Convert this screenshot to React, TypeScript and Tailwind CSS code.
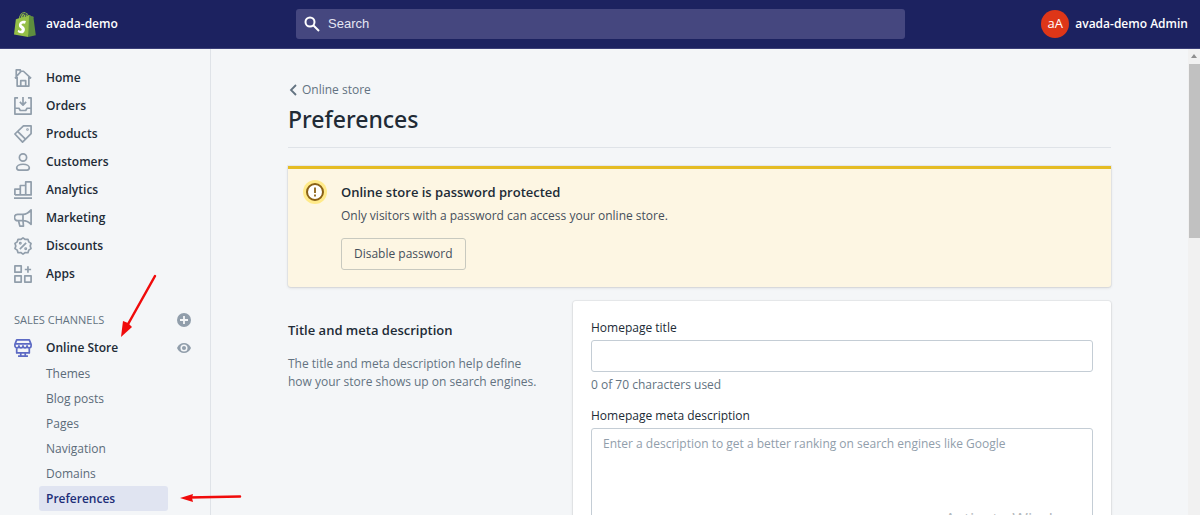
import type { ReactNode } from 'react';

const navItems: { label: string; icon: ReactNode }[] = [
  {
    label: 'Home',
    icon: (
      <>
        <path d="M3.500 9v10h13V9M1 10.500l1.500-1.500M19 10.500 10.500 2.500H8L2.500 8.500V1H7v2.500" />
        <path d="M7.500 19v-6h5.500v6" />
      </>
    ),
  },
  {
    label: 'Orders',
    icon: (
      <>
        <path d="M4.500 1H1v18h18V1h-3.500M1 12.500h4.500l1.500 2.500h6l1.500-2.500H19" />
        <path d="M10 0v9M6.500 5.500 10 9l3.500-3.500" />
      </>
    ),
  },
  {
    label: 'Products',
    icon: (
      <>
        <path d="M10.500 1H19v8.500L9.500 19 1 10z" />
        <path d="m4 7 9 9" />
        <circle cx="15" cy="5" r=".5" />
      </>
    ),
  },
  {
    label: 'Customers',
    icon: (
      <>
        <circle cx="10" cy="5" r="4" />
        <path d="M10 12.500c-4.500 0-7 2-7 4 0 1.500 1 2.500 2.500 2.500h9c1.500 0 2.500-1 2.500-2.500 0-2-2.500-4-7-4z" />
      </>
    ),
  },
  {
    label: 'Analytics',
    icon: <path d="M1 15.500V9h6v6.500M7 15.500V5h6v10.500M13 15.500V1h6v14.500zM1 15.500h18M0 19h20" />,
  },
  {
    label: 'Marketing',
    icon: (
      <>
        <path d="M19 1v16c-3-3-6-4-9-4H4a3.500 3.500 0 0 1 0-7h6c3 0 6-1.500 9-5zM10 6v7" />
        <path d="m5 13 1.500 6h4L10 13" />
      </>
    ),
  },
  {
    label: 'Discounts',
    icon: (
      <>
        <path d="m10 1 2.500 1.700 3-.2.900 2.900 2.500 1.700L18 10l.9 2.900-2.500 1.700-.9 2.900-3-.2L10 19l-2.500-1.700-3 .2-.9-2.900-2.500-1.700L2 10l-.9-2.900 2.500-1.700.9-2.900 3 .2z" />
        <path d="m6.500 13.500 7-7" />
        <circle cx="7" cy="7" r=".7" />
        <circle cx="13" cy="13" r=".7" />
      </>
    ),
  },
  {
    label: 'Apps',
    icon: <path d="M1 1h7v7H1zM1 12h7v7H1zM12 12h7v7h-7zM15.500 1.500v7M12 5h7" />,
  },
];

const channelPages = ['Themes', 'Blog posts', 'Pages', 'Navigation', 'Domains', 'Preferences'];

const NavIcon = ({ children }: { children: ReactNode }) => (
  <svg
    className="h-[18px] w-[18px] shrink-0"
    viewBox="0 0 20 20"
    fill="none"
    stroke="currentColor"
    strokeWidth="1.9"
    strokeLinejoin="round"
    aria-hidden="true"
  >
    {children}
  </svg>
);

const ShopifyLogo = () => (
  <svg className="h-[25px] w-[22px] shrink-0" viewBox="-2 0 110 124" aria-hidden="true">
    <path
      fill="#95bf47"
      d="M95 24c0-.6-.6-1-1-1l-10-.8-7.500-7.500c-.8-.8-2.200-.5-2.800-.3l-3.800 1.200C67.600 9 63.600 3 56.500 3h-.6C54 .6 51.500 0 49.500 0 33 0 25 20.500 22.500 31L11 34.600c-3.600 1.100-3.700 1.200-4.200 4.600L-2 112l71 12z"
    />
    <path fill="#5e8e3e" d="M94 23.200 84 22.400l-7.500-7.500-3-.8L69 124l38-8.500L95 24.300c0-.6-.5-1-1-1.100z" />
    <path
      fill="none"
      stroke="#1c2260"
      strokeWidth="4"
      d="M29 29C32 15 40 5 48 5c7 0 9 9 8 18M42 25C45 14 51 7 57 8c5 1 7 6 8 11"
    />
    <path
      fill="#fff"
      d="m57.600 44.700-4.800 14.200s-4.200-2.200-9.300-2.200c-7.500 0-7.900 4.700-7.900 5.900 0 6.500 16.900 9 16.900 24.100 0 11.900-7.600 19.600-17.700 19.600-12.200 0-18.400-7.600-18.400-7.600l3.300-10.700s6.400 5.500 11.800 5.500c3.500 0 5-2.800 5-4.800 0-8.400-13.900-8.800-13.900-22.600 0-11.700 8.400-22.900 25.200-22.900 6.600 0 9.800 1.500 9.800 1.500z"
    />
  </svg>
);

const Header = () => (
  <header className="flex h-[49px] shrink-0 items-center border-b border-[#3b3f78] bg-[#1c2260] pr-3 pl-3.5 text-xs font-semibold text-white">
    <a href="#" className="flex w-[282px] items-center gap-2.5">
      <ShopifyLogo />
      avada-demo
    </a>
    <label className="flex h-[30px] w-[609px] items-center gap-2 rounded-[3px] bg-[#45477f] px-2">
      <svg className="h-4 w-4 shrink-0" viewBox="0 0 16 16" fill="none" stroke="white" strokeWidth="2" aria-hidden="true">
        <circle cx="6" cy="6" r="4.500" />
        <path d="m9.500 9.500 5.500 5.500" />
      </svg>
      <input
        type="search"
        aria-label="Search"
        placeholder="Search"
        className="min-w-0 flex-1 bg-transparent font-['Liberation_Sans',sans-serif] text-[13px] font-normal outline-none placeholder:text-[#e4e5f2]"
      />
    </label>
    <button type="button" className="ml-auto flex items-center gap-1.5 whitespace-nowrap">
      <span className="flex h-7 w-7 items-center justify-center rounded-full bg-[#de3618] text-[13px] font-normal">aA</span>
      avada-demo Admin
    </button>
  </header>
);

const Sidebar = () => (
  <aside className="relative w-[211px] shrink-0 border-r border-[#dfe3e8] pt-[15px] text-xs text-[#212b36]">
    <nav aria-label="Main">
      <ul>
        {navItems.map((item) => (
          <li key={item.label}>
            <a href="#" className="flex h-7 items-center gap-3.5 pl-3.5 font-semibold">
              <span className="text-[#919eab]">
                <NavIcon>{item.icon}</NavIcon>
              </span>
              {item.label}
            </a>
          </li>
        ))}
      </ul>

      {/* Sales channels */}
      <div className="mt-[18px] flex h-7 items-center justify-between pr-[19px] pl-3.5">
        <h2 className="text-[11px] text-[#637381] uppercase">Sales channels</h2>
        <button type="button" aria-label="Add sales channel">
          <svg className="h-3.5 w-3.5" viewBox="0 0 14 14" aria-hidden="true">
            <circle cx="7" cy="7" r="7" fill="#919eab" />
            <path d="M7 3v8M3 7h8" stroke="#f4f6f8" strokeWidth="1.800" />
          </svg>
        </button>
      </div>
      <div className="flex h-[27px] items-center justify-between pr-[19px] pl-3.5">
        <a href="#" className="flex items-center gap-3.5 font-semibold">
          <span className="text-[#5c6ac4]">
            <NavIcon>
              <path d="M3 1h14l2 5v1.500a2.200 2.200 0 0 1-4.500 0 2.200 2.200 0 0 1-4.500 0 2.200 2.200 0 0 1-4.500 0 2.200 2.200 0 0 1-4.500 0V6zM1 5.500h18M3 10v5.500h14V10M7.500 15.500V19M12.500 15.500V19M4.500 19h11" />
            </NavIcon>
          </span>
          Online Store
        </a>
        <button type="button" aria-label="View your online store">
          <svg className="h-3.5 w-3.5" viewBox="0 0 14 14" aria-hidden="true">
            <path d="M0 7c1.500-3.300 4-5 7-5s5.500 1.700 7 5c-1.500 3.300-4 5-7 5S1.500 10.300 0 7z" fill="#919eab" />
            <circle cx="7" cy="7" r="2.800" fill="none" stroke="#f4f6f8" strokeWidth="1.500" />
          </svg>
        </button>
      </div>
      <ul className="pr-[42px] pl-[39px]">
        {channelPages.map((page) => (
          <li key={page}>
            <a
              href="#"
              className={
                page === 'Preferences'
                  ? 'flex h-[25px] items-center rounded-[3px] bg-[#e0e4f1] pl-[7px] font-semibold text-[#202e78]'
                  : 'flex h-[25px] items-center pl-[7px] text-[#5b6b79]'
              }
            >
              {page}
            </a>
          </li>
        ))}
      </ul>
    </nav>

    {/* Guide arrows */}
    <svg className="pointer-events-none absolute top-[225px] left-[119px] h-[64px] w-[38px]" viewBox="0 0 38 64" aria-hidden="true">
      <path d="M36 2 8 52" stroke="#f00b0b" strokeWidth="2.500" strokeLinecap="round" />
      <path d="m2 63 2-16 5 2 4 4z" fill="#f00b0b" />
    </svg>
    <svg className="pointer-events-none absolute top-[441px] left-[179px] h-4 w-16" viewBox="0 0 64 16" aria-hidden="true">
      <path d="m10 7.500 51-1" stroke="#f00b0b" strokeWidth="2.500" strokeLinecap="round" />
      <path d="m1 8 13-4-1 4 1 4z" fill="#f00b0b" />
    </svg>
  </aside>
);

const PasswordBanner = () => (
  <section className="mt-[18px] flex gap-3.5 rounded-b-[3px] border-t-[3px] border-[#e5bc23] bg-[#fdf6e3] px-[15px] pt-[11px] pb-[17px] shadow-[0_0_0_1px_rgba(63,63,68,0.06),0_1px_3px_rgba(63,63,68,0.15)]">
    <svg className="h-6 w-6 shrink-0" viewBox="0 0 24 24" aria-hidden="true">
      <circle cx="12" cy="12" r="12" fill="#ffea8a" />
      <circle cx="12" cy="12" r="8" fill="#fff" stroke="#8a6116" strokeWidth="2" />
      <path d="M12 7.500V13M12 14.500v2" stroke="#8a6116" strokeWidth="1.800" />
    </svg>
    <div className="text-xs text-[#454f5b]">
      <h2 className="text-[13px] leading-6 font-semibold text-[#212b36]">Online store is password protected</h2>
      <p className="leading-6">Only visitors with a password can access your online store.</p>
      <button type="button" className="mt-2.5 h-8 rounded-[3px] border border-[#c8c9bf] px-3">
        Disable password
      </button>
    </div>
  </section>
);

const TitleAndMeta = () => (
  <section className="mt-3.5 flex gap-3.5 text-xs">
    <div className="flex-1 pt-[18px]">
      <h2 className="text-[13px] leading-[22px] font-semibold text-[#212b36]">Title and meta description</h2>
      <p className="mt-3.5 max-w-[256px] leading-[18px] text-[#637381]">
        The title and meta description help define how your store shows up on search engines.
      </p>
    </div>
    <div className="w-[538px] rounded-[3px] bg-white px-[18px] pt-[18px] pb-6 text-[#212b36] shadow-[0_0_0_1px_rgba(63,63,68,0.06),0_1px_3px_rgba(63,63,68,0.15)]">
      <label htmlFor="homepage-title" className="block leading-[18px]">
        Homepage title
      </label>
      <input id="homepage-title" type="text" className="mt-[3px] block h-8 w-full rounded-[3px] border border-[#c4cdd5] px-[11px]" />
      <p className="mt-1 leading-[18px] text-[#637381]">0 of 70 characters used</p>
      <label htmlFor="homepage-meta" className="mt-[13px] block leading-[18px]">
        Homepage meta description
      </label>
      <textarea
        id="homepage-meta"
        placeholder="Enter a description to get a better ranking on search engines like Google"
        className="mt-[3px] block h-32 w-full resize-none rounded-[3px] border border-[#c4cdd5] px-[11px] py-1.5 leading-[18px] placeholder:text-[#919eab]"
      />
    </div>
  </section>
);

const App = () => {
  return (
    <div className="relative flex h-screen flex-col overflow-hidden bg-[#f4f6f8] font-['Open_Sans','Noto_Sans',sans-serif]">
      <Header />
      <div className="flex min-h-0 flex-1">
        <Sidebar />
        <main className="min-w-0 flex-1 overflow-hidden px-[77px] pt-8">
          <a href="#" className="flex items-center gap-1 text-xs leading-[18px] text-[#637381]">
            <svg className="h-3 w-2.5" viewBox="0 0 10 12" fill="none" stroke="currentColor" strokeWidth="1.800" aria-hidden="true">
              <path d="M8 1 3 6l5 5" />
            </svg>
            Online store
          </a>
          <h1 className="mt-[5px] border-b border-[#dfe3e8] pb-3 font-['Noto_Sans','Open_Sans',sans-serif] text-[23px] leading-[31px] font-medium text-[#212b36]">
            Preferences
          </h1>
          <PasswordBanner />
          <TitleAndMeta />
        </main>

        {/* Scroll track */}
        <div className="flex w-3 shrink-0 flex-col items-center bg-[#f1f1f1]" aria-hidden="true">
          <svg className="mt-[5px] h-1 w-1.5" viewBox="0 0 6 4">
            <path d="M0 4h6L3 0z" fill="#8f8f8f" />
          </svg>
          <div className="mt-1.5 h-[174px] w-[11px] self-end bg-[#c1c1c1]" />
        </div>
      </div>
      <p className="absolute top-[507px] left-[945px] text-[17px] leading-6 text-[#b5b9bd]" aria-hidden="true">
        Activate Windows
      </p>
    </div>
  );
};

export default App;
